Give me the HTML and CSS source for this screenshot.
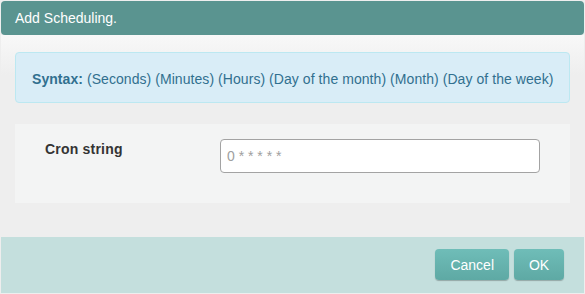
FILE: index.html
```html
<!DOCTYPE html>
<html lang="en">
<head>
    <meta charset="UTF-8">
    <meta name="viewport" content="width=device-width, initial-scale=1.0">
    <title>Add Scheduling</title>
    <link rel="stylesheet" href="styles.css">
</head>
<body>
    <div class="dialog">
        <div class="dialog-header">Add Scheduling.</div>

        <div class="dialog-body">
            <div class="alert-info">
                <strong>Syntax:</strong> (Seconds) (Minutes) (Hours) (Day of the month) (Month) (Day of the week)
            </div>

            <form class="form-panel" onsubmit="return false;">
                <label for="cronInput" class="form-label">Cron string</label>
                <input type="text" id="cronInput" class="form-input" placeholder="0 * * * * *">
            </form>
        </div>

        <div class="dialog-footer">
            <button type="button" class="btn">Cancel</button>
            <button type="button" class="btn btn-ok">OK</button>
        </div>
    </div>
</body>
</html>
```

FILE: styles.css
```css
body {
    margin: 0;
    background-color: #eeeeee;
    font-family: "Liberation Sans", Arial, sans-serif;
    font-size: 14px;
}
.dialog {
    width: 583px;
    margin: 1px 0 0 1px;
}
.dialog-header {
    height: 34px;
    line-height: 34px;
    padding-left: 14px;
    background-color: #5a9490;
    color: #ffffff;
    border-radius: 4px;
}
.dialog-body {
    padding: 17px 14px 34px 14px;
    background: linear-gradient(#f8f8f8, #eeeeee 40px);
}
.alert-info {
    padding: 16px 16px 13px 16px;
    line-height: 20px;
    background-color: #d9edf7;
    border: 1px solid #bce8f1;
    border-radius: 4px;
    color: #31708f;
    white-space: nowrap;
    letter-spacing: 0.06px;
}
.alert-info strong {
    font-weight: bold;
}
.form-panel {
    display: flex;
    align-items: flex-start;
    margin: 21px 0 0 0;
    padding: 15px 0 30px 30px;
    background-color: #f3f4f4;
}
.form-label {
    width: 175px;
    padding-top: 0;
    line-height: 20px;
    font-weight: bold;
    color: #333333;
    letter-spacing: 0.2px;
}
.form-input {
    box-sizing: border-box;
    width: 320px;
    height: 34px;
    padding: 0 6px;
    border: 1px solid #a3a3a3;
    border-radius: 4px;
    background-color: #ffffff;
    font-family: inherit;
    font-size: 14px;
    color: #555555;
}
.form-input::placeholder {
    color: #a0a0a0;
}
.dialog-footer {
    display: flex;
    justify-content: flex-end;
    gap: 5px;
    height: 56px;
    box-sizing: border-box;
    padding: 12px 20px 0 0;
    background-color: #c4dfdd;
}
.btn {
    height: 31px;
    padding: 0 15px;
    border: none;
    border-radius: 4px;
    background: linear-gradient(#6fbdb8, #5ea9a4);
    box-shadow: 0 1px 1px rgba(0, 0, 0, 0.25);
    color: #ffffff;
    font-family: inherit;
    font-size: 14px;
    cursor: pointer;
}
.btn-ok {
    width: 50px;
    padding: 0;
}
```
